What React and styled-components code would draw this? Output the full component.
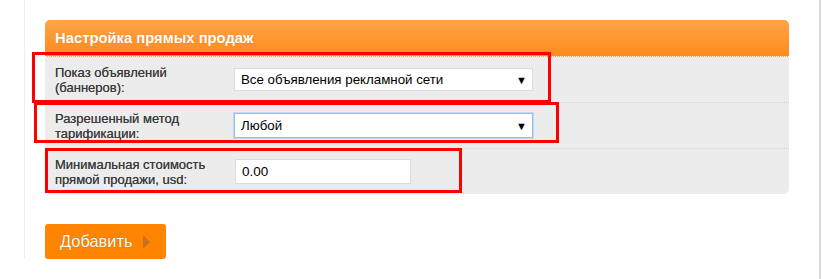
import styled, { createGlobalStyle } from 'styled-components';

const GlobalStyle = createGlobalStyle`
  html, body {
    margin: 0;
    padding: 0;
    background: #fff;
    font-family: "Liberation Sans", Arial, sans-serif;
  }
`;

const rows = [
  { label: ['Показ объявлений', '(баннеров):'], type: 'select', value: 'Все объявления рекламной сети' },
  { label: ['Разрешенный метод', 'тарификации:'], type: 'select', value: 'Любой', focused: true },
  { label: ['Минимальная стоимость', 'прямой продажи, usd:'], type: 'input', value: '0.00' },
];

// red annotation frames drawn over the form
const marks = [
  { left: 32, top: 52, width: 519, height: 51 },
  { left: 34, top: 102, width: 525, height: 41 },
  { left: 45, top: 148, width: 417, height: 45 },
];

const App = () => {
  return (
    <Page>
      <GlobalStyle />
      <Content>
        <Panel>
          <PanelHeader>Настройка прямых продаж</PanelHeader>
          {rows.map((row, i) => (
            <Row key={i} $first={i === 0}>
              <Label>
                {row.label[0]}
                <br />
                {row.label[1]}
              </Label>
              {row.type === 'select' ? (
                <SelectBox $focused={row.focused}>
                  <span>{row.value}</span>
                  <Arrow>▼</Arrow>
                </SelectBox>
              ) : (
                <TextInput defaultValue={row.value} />
              )}
            </Row>
          ))}
        </Panel>
        <AddButton>
          Добавить
          <ButtonArrow />
        </AddButton>
      </Content>
      {marks.map((m, i) => (
        <Mark key={i} style={{ left: m.left, top: m.top, width: m.width, height: m.height }} />
      ))}
    </Page>
  );
};

export default App;

const Page = styled.div`
  position: relative;
  width: 821px;
  height: 279px;
  padding-left: 24px;
  box-sizing: border-box;
  border-right: 2px solid #d9d9d9;
`;

const Content = styled.div`
  width: 795px;
  height: 258px;
  box-sizing: border-box;
  border-left: 1px solid #eeeeee;
  padding: 20px 0 0 20px;
`;

const Panel = styled.div`
  width: 744px;
  background: #ececec;
  border-radius: 5px;
  overflow: hidden;
`;

const PanelHeader = styled.div`
  height: 36px;
  line-height: 37px;
  padding-left: 10px;
  background: linear-gradient(to bottom, #ffa448 0%, #ff8a1c 100%);
  border-bottom: 1px dotted #f6f6f6;
  color: #fff;
  font-size: 14.8px;
  font-weight: bold;
  text-shadow: 0 0 1px rgba(150, 70, 0, 0.35);
`;

const Row = styled.div`
  display: flex;
  align-items: center;
  height: 45px;
  padding-left: 10px;
  border-top: ${({ $first }) => ($first ? 'none' : '1px dotted #d2d2d2')};
`;

const Label = styled.div`
  width: 179px;
  font-size: 13px;
  line-height: 15px;
  color: #3a3a3a;
  margin-top: 1px;
  text-shadow: 0 0 0.4px #555;
`;

const SelectBox = styled.div`
  display: flex;
  align-items: center;
  justify-content: space-between;
  width: 299px;
  height: ${({ $focused }) => ($focused ? '25px' : '23px')};
  box-sizing: border-box;
  padding: 0 5px 0 6px;
  background: #fff;
  border: 1px solid ${({ $focused }) => ($focused ? '#9dbbec' : '#dcdcdc')};
  box-shadow: ${({ $focused }) => ($focused ? '0 0 0 1px #c3d6f5' : 'none')};
  font-size: 13.3px;
  color: #000;
`;

const Arrow = styled.span`
  font-size: 11px;
  color: #000;
`;

const TextInput = styled.input`
  width: 176px;
  height: 25px;
  box-sizing: border-box;
  margin-left: 1px;
  padding: 0 6px;
  border: 1px solid #dcdcdc;
  background: #fff;
  font-family: "Liberation Sans", Arial, sans-serif;
  font-size: 13.5px;
  color: #000;
  outline: none;
`;

const AddButton = styled.button`
  display: flex;
  align-items: center;
  margin-top: 30px;
  width: 121px;
  height: 35px;
  padding: 0 0 0 15px;
  border: none;
  border-radius: 3px;
  background: #ff8500;
  color: #fff;
  font-family: "Liberation Sans", Arial, sans-serif;
  font-size: 16.4px;
  text-shadow: 0 0 1px rgba(120, 50, 0, 0.6);
  cursor: pointer;
`;

const ButtonArrow = styled.span`
  margin-left: 11px;
  width: 0;
  height: 0;
  border-top: 7px solid transparent;
  border-bottom: 7px solid transparent;
  border-left: 7px solid #c8721f;
`;

const Mark = styled.div`
  position: absolute;
  box-sizing: border-box;
  border: 3px solid #ff0000;
  pointer-events: none;
`;
